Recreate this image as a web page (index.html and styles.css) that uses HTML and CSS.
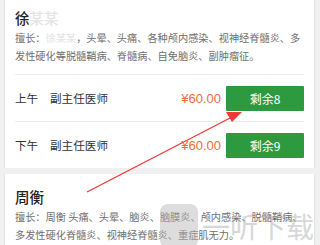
FILE: index.html
```html
<!DOCTYPE html>
<html lang="zh-CN">
<head>
  <meta charset="UTF-8">
  <meta name="viewport" content="width=device-width, initial-scale=1.0">
  <title>医生排班</title>
  <link rel="stylesheet" href="styles.css">
</head>
<body>

  <!-- 医生列表 -->
  <div class="doc-list">
    <div class="doc-card first">
      <div class="doc-name">徐<span class="blur">某某</span></div>
      <p class="doc-intro">擅长：<span class="blur">徐某某</span>，头晕、头痛、各种颅内感染、视神经脊髓炎、多发性硬化等脱髓鞘病、脊髓病、自免脑炎、副肿瘤征。</p>
      <div class="slot">
        <span class="slot-time">上午</span>
        <span class="slot-title">副主任医师</span>
        <span class="slot-price">¥60.00</span>
        <button class="slot-btn">剩余8</button>
      </div>
      <div class="slot">
        <span class="slot-time">下午</span>
        <span class="slot-title">副主任医师</span>
        <span class="slot-price">¥60.00</span>
        <button class="slot-btn">剩余9</button>
      </div>
    </div>

    <div class="doc-card">
      <div class="doc-name">周衡</div>
      <p class="doc-intro">擅长：周衡 头痛、头晕、脑炎、脑膜炎、颅内感染、脱髓鞘病、多发性硬化脊髓炎、视神经脊髓炎、重症肌无力。</p>
    </div>
  </div>

  <!-- 标注箭头 -->
  <svg class="arrow" width="320" height="245" viewBox="0 0 320 245">
    <line x1="87" y1="192" x2="232" y2="117" stroke="#f23a3a" stroke-width="1.4"/>
    <polygon points="242,112 226,112 232,122" fill="#f23a3a"/>
  </svg>

  <!-- 水印 -->
  <div class="watermark">
    <span class="wm-logo"></span>
    <span class="wm-text">一听下载</span>
  </div>

</body>
</html>
```

FILE: styles.css
```css
/* 页面背景 */
body {
  margin: 0;
  width: 320px;
  height: 245px;
  overflow: hidden;
  background-color: #f0f0f0;
  font-family: "Noto Sans CJK SC", "Liberation Sans", sans-serif;
  position: relative;
}

.doc-list {
  display: flex;
  flex-direction: column;
  gap: 6px;
  padding: 0 5px 0 4px;
}

/* 医生卡片 */
.doc-card {
  background-color: #fff;
  border-left: 1px solid #e2e2e2;
  border-right: 1px solid #e2e2e2;
  padding: 14px 10px 0 10px;
}

.doc-card.first {
  margin-top: -5px;
}

.doc-name {
  font-size: 14.5px;
  line-height: 18px;
  color: #222;
  font-weight: 500;
}

.blur {
  color: #e4e4e4;
}

.doc-intro {
  margin: 2px -6px 0 0;
  padding-bottom: 9px;
  font-size: 10.2px;
  line-height: 18px;
  color: #6f6f6f;
}

/* 排班行 */
.slot {
  display: flex;
  align-items: center;
  height: 46px;
  border-top: 1px solid #ececec;
  font-size: 11.6px;
  color: #333;
}

.slot-time {
  width: 35px;
}

.slot-title {
  flex: 1;
}

.slot-price {
  color: #f26b3a;
  font-family: "Liberation Sans", sans-serif;
  font-size: 13px;
  margin-right: 5px;
}

.slot-btn {
  width: 78px;
  height: 25px;
  border: none;
  border-radius: 1px;
  background-color: #2e9a3f;
  color: #fff;
  font-family: inherit;
  font-size: 12px;
  padding: 0;
}

/* 箭头覆盖层 */
.arrow {
  position: absolute;
  top: 0;
  left: 0;
}

/* 水印 */
.watermark {
  position: absolute;
  left: 160px;
  top: 204px;
  display: flex;
  align-items: center;
  gap: 4px;
  white-space: nowrap;
  opacity: 0.45;
}

.wm-logo {
  width: 38px;
  height: 44px;
  border-radius: 8px;
  background-color: #b5b5b5;
}

.wm-text {
  font-size: 28px;
  line-height: 32px;
  color: #a8a8a8;
}
```
